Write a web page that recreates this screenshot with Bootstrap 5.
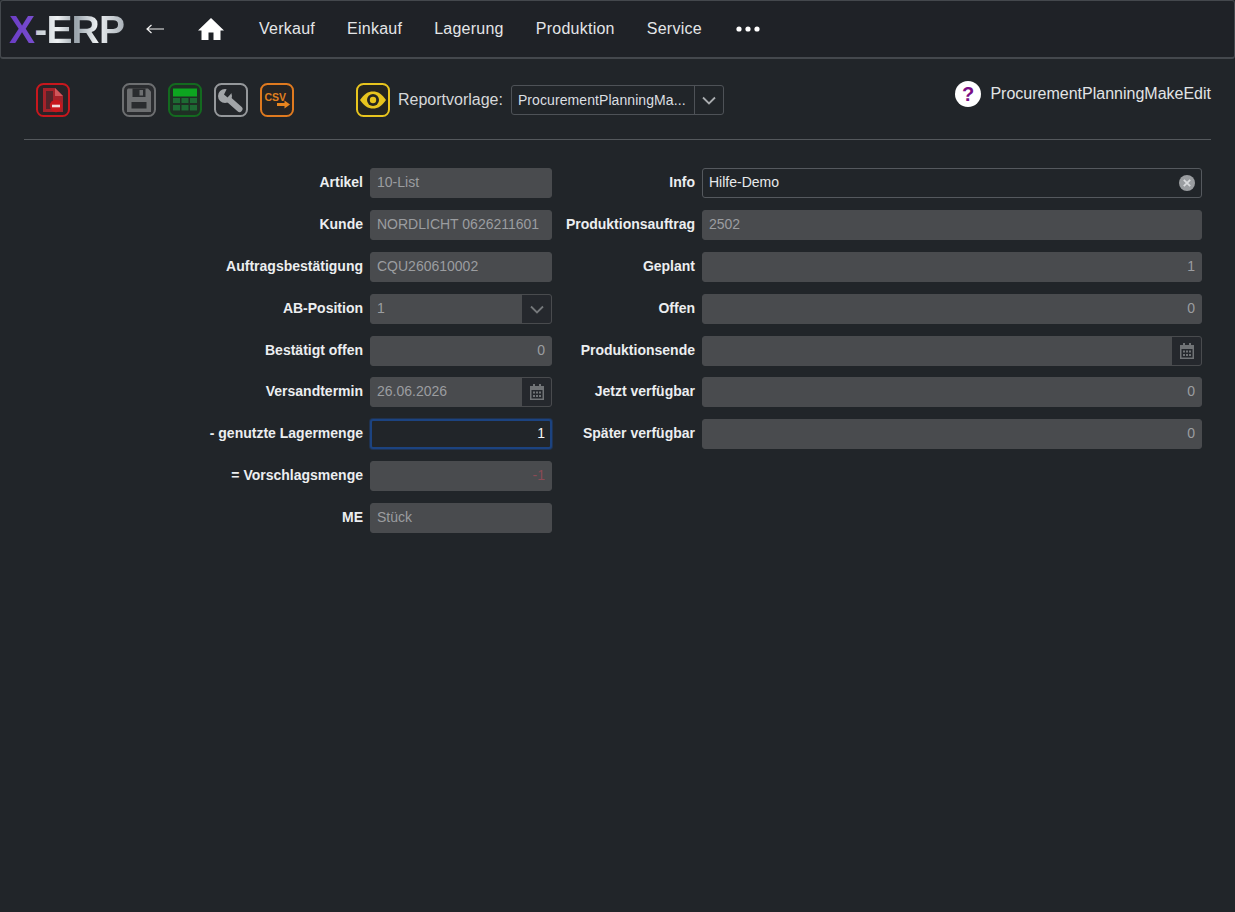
<!DOCTYPE html>
<html lang="de" data-bs-theme="dark">
<head>
  <meta charset="UTF-8" />
  <meta name="viewport" content="width=device-width, initial-scale=1.0"/>
  <title>X-ERP</title>
  <link href="https://cdn.jsdelivr.net/npm/bootstrap@5.3.3/dist/css/bootstrap.min.css" rel="stylesheet"/>
  <style>
    body { background: #212529; font-family: "Liberation Sans", Arial, sans-serif; font-size: 14px; color: #dee2e6; min-height: 912px; }

    /* top bar */
    .topbar { height: 59px; padding: 0 0 0 8px; background: #1f2227; border: 1px solid #44484d; border-bottom-width: 2px; border-radius: 3px; }
    .logo-text { font-size: 39px; font-weight: 700; line-height: 1; letter-spacing: -.8px; width: 116px; white-space: nowrap;
      background: linear-gradient(90deg, #6a3cc4 0, #7a4fd0 23%, #c4ccd2 24%, #eef1f3 42%, #9aa4ac 58%, #eef1f3 76%, #a8b0b7 100%); -webkit-background-clip: text; background-clip: text; color: transparent; }
    .back-arrow { margin-left: 21px; width: 18px; line-height: 0; }
    .home-link { margin-left: 34px; margin-right: 19px; line-height: 0; }
    .topbar .nav-link { font-size: 16px; letter-spacing: .25px; color: #e4e6e8; padding: 0; margin: 0 16px; }
    .more-dots { margin-left: 18px; line-height: 0; }

    /* tool row */
    .tool-row { height: 81px; margin: 0 24px; padding: 2px 0 0 12px; border-bottom: 1px solid #54585c; }
    .tool-btn { display: block; width: 34px; height: 34px; flex: none; }
    .tool-gap-first { margin-right: 52px; }
    .tool-gap-last { margin-right: 62px; }
    .tool-gap { margin-right: 12px; }
    .report-label { font-size: 16px; color: #d6d8da; margin: 0 8px 0 8px; }
    .report-select { width: 213px; height: 30px; border: 1px solid #4e5257; border-radius: 3px; }
    .report-value { flex: 1; padding-left: 6px; font-size: 14px; letter-spacing: .08px; color: #dcdfe1; white-space: nowrap; border-right: 1px solid #4e5257; line-height: 28px; }
    .report-arrow { width: 28px; text-align: center; line-height: 0; }
    .help-block { margin-bottom: 12px; }
    .help-text { font-size: 16px; color: #e2e4e6; margin-left: 9px; }

    /* form */
    .form-area { padding-top: 28px; }
    .form-left { width: 552px; flex: none; }
    .form-right { width: 650px; flex: none; }
    .field-row { height: 30px; margin-bottom: 12px; }
    .field-row.row-tight { margin-bottom: 11px; }
    .field-label { flex: none; font-weight: 700; color: #eceef0; text-align: right; padding: 0 7px 2px 0; white-space: nowrap; }
    .form-left .field-label { width: 370px; }
    .form-right .field-label { width: 150px; }
    .field-box { flex: 1; min-width: 0; height: 30px; display: flex; border: 1px solid #494b4e; border-radius: 3px; background: #494b4e; overflow: hidden; }
    .field-input { flex: 1; min-width: 0; background: transparent; border: 0; outline: 0; padding: 0 6px 2px; font-size: 14px; font-family: inherit; color: #9b9da0; }
    .field-input.num { text-align: right; }
    .field-input.neg { color: #8a4a55; }
    .field-addon { width: 29px; flex: none; background: #25282d; display: flex; align-items: center; justify-content: center; }
    .field-box.is-open { background: #212529; border-color: #55595e; }
    .field-box.is-open .field-input { color: #e8eaec; }
    .field-box.is-focus { background: #212529; border: 2px solid #1c4380; box-shadow: 0 0 0 1px rgba(28, 67, 128, .45); }
    .field-box.is-focus .field-input { color: #f4f5f6; padding: 0 5px 2px; }
    .clear-icon { width: 28px; display: flex; align-items: center; justify-content: center; }
  </style>
</head>
<body>
  <!-- Top navigation -->
  <nav class="topbar d-flex align-items-center">
    <span class="logo-text">X-ERP</span>
    <span class="back-arrow">
      <svg width="18" height="10" viewBox="0 0 18 10"><path d="M1 5h17M5.500 1L1 5l4.500 4" fill="none" stroke="#f1f1f1" stroke-width="1.200"/></svg>
    </span>
    <a class="home-link" href="#">
      <svg width="26" height="22" viewBox="0 0 26 22"><path fill="#fff" d="M13 0 L26 12.500 H22.500 V22 H15.500 V14.500 H10.500 V22 H3.500 V12.500 H0 Z"/></svg>
    </a>
    <a class="nav-link" href="#">Verkauf</a>
    <a class="nav-link" href="#">Einkauf</a>
    <a class="nav-link" href="#">Lagerung</a>
    <a class="nav-link" href="#">Produktion</a>
    <a class="nav-link" href="#">Service</a>
    <span class="more-dots">
      <svg width="24" height="6" viewBox="0 0 24 6"><circle cx="3" cy="3" r="2.600" fill="#fff"/><circle cx="12" cy="3" r="2.600" fill="#fff"/><circle cx="21" cy="3" r="2.600" fill="#fff"/></svg>
    </span>
  </nav>

  <!-- Toolbar -->
  <div class="tool-row d-flex align-items-center">
    <a class="tool-btn tool-gap-first" href="#">
      <svg width="34" height="34" viewBox="0 0 34 34"><rect x="1" y="1" width="32" height="32" rx="6.500" fill="#2a2327" stroke="#c8171d" stroke-width="2"/><path fill="#a5222a" d="M7 5h12l8 8v16H7z"/><path fill="#55242a" d="M10 8h7v18h-7z"/><path fill="#d0565b" d="M19 5l8 8h-8z"/><circle cx="20" cy="23" r="6.200" fill="#c8171d"/><rect x="16" y="21.700" width="8" height="2.600" fill="#f0dcdc"/></svg>
    </a>
    <a class="tool-btn tool-gap" href="#">
      <svg width="34" height="34" viewBox="0 0 34 34"><rect x="1" y="1" width="32" height="32" rx="6.500" fill="#2a2c2f" stroke="#6d6f71" stroke-width="2"/><path fill="#6d6f71" d="M6 5.500h20l3 3V29H5V6.500z"/><rect x="10.500" y="5.500" width="13" height="8.500" fill="#2a2c2f"/><rect x="17.500" y="7" width="3.500" height="5.500" fill="#6d6f71"/><rect x="9.500" y="19" width="15" height="6.500" fill="#2a2c2f"/></svg>
    </a>
    <a class="tool-btn tool-gap" href="#">
      <svg width="34" height="34" viewBox="0 0 34 34"><rect x="1" y="1" width="32" height="32" rx="6.500" fill="#1f2f24" stroke="#136a1f" stroke-width="2"/><rect x="5" y="5.500" width="24" height="8" fill="#0da520"/><g fill="#1d6a33"><rect x="5" y="15" width="7" height="5"/><rect x="13.500" y="15" width="7" height="5"/><rect x="22" y="15" width="7" height="5"/><rect x="5" y="22" width="7" height="5.500"/><rect x="13.500" y="22" width="7" height="5.500"/><rect x="22" y="22" width="7" height="5.500"/></g></svg>
    </a>
    <a class="tool-btn tool-gap" href="#">
      <svg width="34" height="34" viewBox="0 0 34 34"><rect x="1" y="1" width="32" height="32" rx="6.500" fill="#24272b" stroke="#95989b" stroke-width="2"/><circle cx="11" cy="13" r="7" fill="#a2a5a8"/><path d="M13 15l12.500 11" stroke="#a2a5a8" stroke-width="6" stroke-linecap="round"/><path fill="#24272b" d="M10 11.500l3-6 6 3-5.500 6z"/></svg>
    </a>
    <a class="tool-btn tool-gap-last" href="#">
      <svg width="34" height="34" viewBox="0 0 34 34"><rect x="1" y="1" width="32" height="32" rx="6.500" fill="#262423" stroke="#e07a1f" stroke-width="2"/><text x="4.500" y="18" font-family="Liberation Sans, sans-serif" font-weight="700" font-size="10.500" fill="#e0801f">CSV</text><path fill="#e8851f" d="M17 20h7.500v-2.500l5.500 4-5.500 4V23H17z"/></svg>
    </a>
    <a class="tool-btn" href="#">
      <svg width="34" height="34" viewBox="0 0 34 34"><rect x="1" y="1" width="32" height="32" rx="6.500" fill="#25251f" stroke="#e8c51e" stroke-width="2"/><path fill="#e8c51e" d="M4 17C8 11 12 8.500 17 8.500S26 11 30 17c-4 6-8 8.500-13 8.500S8 23 4 17z"/><circle cx="17" cy="17" r="6" fill="#25251f"/><circle cx="17" cy="17" r="3.200" fill="#e8c51e"/></svg>
    </a>
    <span class="report-label">Reportvorlage:</span>
    <div class="report-select d-flex align-items-center">
      <span class="report-value">ProcurementPlanningMa...</span>
      <span class="report-arrow">
        <svg width="14" height="9" viewBox="0 0 14 9"><path d="M1 1.500l6 6 6-6" fill="none" stroke="#a9acaf" stroke-width="1.800"/></svg>
      </span>
    </div>
    <div class="ms-auto d-flex align-items-center help-block">
      <svg width="26" height="26" viewBox="0 0 26 26"><circle cx="13" cy="13" r="13" fill="#fff"/><text x="13" y="20" text-anchor="middle" font-family="Liberation Sans, sans-serif" font-weight="700" font-size="20" fill="#7a0f86">?</text></svg>
      <span class="help-text">ProcurementPlanningMakeEdit</span>
    </div>
  </div>

  <!-- Form -->
  <div class="form-area d-flex">
    <div class="form-left">
      <div class="field-row d-flex align-items-center"><label class="field-label">Artikel</label><div class="field-box"><input class="field-input" value="10-List" disabled></div></div>
      <div class="field-row d-flex align-items-center"><label class="field-label">Kunde</label><div class="field-box"><input class="field-input" value="NORDLICHT 0626211601" disabled></div></div>
      <div class="field-row d-flex align-items-center"><label class="field-label">Auftragsbestätigung</label><div class="field-box"><input class="field-input" value="CQU260610002" disabled></div></div>
      <div class="field-row d-flex align-items-center"><label class="field-label">AB-Position</label><div class="field-box"><input class="field-input" value="1" disabled><span class="field-addon"><svg width="14" height="9" viewBox="0 0 14 9"><path d="M1 1.500l6 6 6-6" fill="none" stroke="#74777a" stroke-width="1.800"/></svg></span></div></div>
      <div class="field-row row-tight d-flex align-items-center"><label class="field-label">Bestätigt offen</label><div class="field-box"><input class="field-input num" value="0" disabled></div></div>
      <div class="field-row d-flex align-items-center"><label class="field-label">Versandtermin</label><div class="field-box"><input class="field-input" value="26.06.2026" disabled><span class="field-addon"><svg width="14" height="16" viewBox="0 0 14 16"><path fill="#707376" d="M3 0h2v2h4V0h2v2h3v14H0V2h3zM1.500 6v8.500h11V6z"/><path fill="#707376" d="M3 7.500h2v2H3zM6 7.500h2v2H6zM9 7.500h2v2H9zM3 11h2v2H3zM6 11h2v2H6zM9 11h2v2H9z"/></svg></span></div></div>
      <div class="field-row d-flex align-items-center"><label class="field-label">- genutzte Lagermenge</label><div class="field-box is-focus"><input class="field-input num" value="1"></div></div>
      <div class="field-row d-flex align-items-center"><label class="field-label">= Vorschlagsmenge</label><div class="field-box"><input class="field-input num neg" value="-1" disabled></div></div>
      <div class="field-row d-flex align-items-center"><label class="field-label">ME</label><div class="field-box"><input class="field-input" value="Stück" disabled></div></div>
    </div>
    <div class="form-right">
      <div class="field-row d-flex align-items-center"><label class="field-label">Info</label><div class="field-box is-open"><input class="field-input" value="Hilfe-Demo"><span class="clear-icon"><svg width="16" height="16" viewBox="0 0 16 16"><circle cx="8" cy="8" r="8" fill="#9a9da0"/><path d="M4.800 4.800l6.400 6.400M11.200 4.800l-6.400 6.400" stroke="#d8dadc" stroke-width="1.800"/></svg></span></div></div>
      <div class="field-row d-flex align-items-center"><label class="field-label">Produktionsauftrag</label><div class="field-box"><input class="field-input" value="2502" disabled></div></div>
      <div class="field-row d-flex align-items-center"><label class="field-label">Geplant</label><div class="field-box"><input class="field-input num" value="1" disabled></div></div>
      <div class="field-row d-flex align-items-center"><label class="field-label">Offen</label><div class="field-box"><input class="field-input num" value="0" disabled></div></div>
      <div class="field-row row-tight d-flex align-items-center"><label class="field-label">Produktionsende</label><div class="field-box"><input class="field-input" value="" disabled><span class="field-addon"><svg width="14" height="16" viewBox="0 0 14 16"><path fill="#707376" d="M3 0h2v2h4V0h2v2h3v14H0V2h3zM1.500 6v8.500h11V6z"/><path fill="#707376" d="M3 7.500h2v2H3zM6 7.500h2v2H6zM9 7.500h2v2H9zM3 11h2v2H3zM6 11h2v2H6zM9 11h2v2H9z"/></svg></span></div></div>
      <div class="field-row d-flex align-items-center"><label class="field-label">Jetzt verfügbar</label><div class="field-box"><input class="field-input num" value="0" disabled></div></div>
      <div class="field-row d-flex align-items-center"><label class="field-label">Später verfügbar</label><div class="field-box"><input class="field-input num" value="0" disabled></div></div>
    </div>
  </div>

  <script src="https://cdn.jsdelivr.net/npm/bootstrap@5.3.3/dist/js/bootstrap.bundle.min.js"></script>
</body>
</html>
